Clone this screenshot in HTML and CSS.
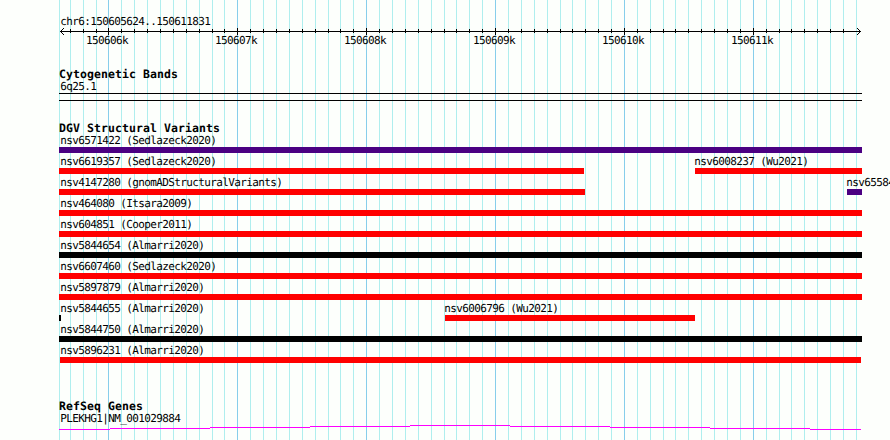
FILE: index.html
```
<!DOCTYPE html>
<html lang="en">
<head>
    <meta charset="UTF-8">
    <title>chr6:150605624..150611831</title>
    <link rel="stylesheet" href="styles.css">
</head>
<body>
    <div class="browser">
        <!-- Vertical grid behind all tracks -->
        <svg class="grid" width="890" height="440" shape-rendering="crispEdges">
            <path class="minor" d="M59.5 0V440M70.5 0V440M83.5 0V440M96.5 0V440M121.5 0V440M134.5 0V440M147.5 0V440M160.5 0V440M173.5 0V440M186.5 0V440M199.5 0V440M212.5 0V440M224.5 0V440M250.5 0V440M263.5 0V440M276.5 0V440M289.5 0V440M302.5 0V440M315.5 0V440M328.5 0V440M340.5 0V440M353.5 0V440M379.5 0V440M392.5 0V440M405.5 0V440M418.5 0V440M431.5 0V440M444.5 0V440M456.5 0V440M469.5 0V440M482.5 0V440M508.5 0V440M521.5 0V440M534.5 0V440M547.5 0V440M560.5 0V440M572.5 0V440M585.5 0V440M598.5 0V440M611.5 0V440M637.5 0V440M650.5 0V440M663.5 0V440M675.5 0V440M688.5 0V440M701.5 0V440M714.5 0V440M727.5 0V440M740.5 0V440M766.5 0V440M779.5 0V440M791.5 0V440M804.5 0V440M817.5 0V440M830.5 0V440M843.5 0V440M856.5 0V440"/>
            <path class="major" d="M108.5 0V440M237.5 0V440M366.5 0V440M495.5 0V440M624.5 0V440M753.5 0V440"/>
        </svg>

        <!-- Scale -->
        <div class="label">chr6:150605624..150611831</div>
        <svg class="ruler" width="803" height="9" viewBox="59 27 803 9" shape-rendering="crispEdges">
            <path d="M60 31.5H861"/>
            <path d="M70.5 29V33M83.5 29V33M96.5 29V33M121.5 29V33M134.5 29V33M147.5 29V33M160.5 29V33M173.5 29V33M186.5 29V33M199.5 29V33M212.5 29V33M224.5 29V33M250.5 29V33M263.5 29V33M276.5 29V33M289.5 29V33M302.5 29V33M315.5 29V33M328.5 29V33M340.5 29V33M353.5 29V33M379.5 29V33M392.5 29V33M405.5 29V33M418.5 29V33M431.5 29V33M444.5 29V33M456.5 29V33M469.5 29V33M482.5 29V33M508.5 29V33M521.5 29V33M534.5 29V33M547.5 29V33M560.5 29V33M572.5 29V33M585.5 29V33M598.5 29V33M611.5 29V33M637.5 29V33M650.5 29V33M663.5 29V33M675.5 29V33M688.5 29V33M701.5 29V33M714.5 29V33M727.5 29V33M740.5 29V33M766.5 29V33M779.5 29V33M791.5 29V33M804.5 29V33M817.5 29V33M830.5 29V33M843.5 29V33"/>
            <path d="M108.5 28V35M237.5 28V35M366.5 28V35M495.5 28V35M624.5 28V35M753.5 28V35"/>
            <path d="M61 30.5h1M62 29.5h1M63 28.5h1M61 32.5h1M62 33.5h1M63 34.5h1M859 30.5h1M858 29.5h1M857 28.5h1M859 32.5h1M858 33.5h1M857 34.5h1"/>
        </svg>
        <div class="ticks label">
            <span>150606k</span>
            <span>150607k</span>
            <span>150608k</span>
            <span>150609k</span>
            <span>150610k</span>
            <span>150611k</span>
        </div>

        <!-- Cytogenetic bands -->
        <section class="cyto">
            <h2>Cytogenetic Bands</h2>
            <div class="label">6q25.1</div>
            <div class="band"></div>
        </section>

        <!-- Structural variants -->
        <section class="variants">
            <h2>DGV Structural Variants</h2>
            <div class="row">
                <div class="feature"><div class="label">nsv6571422 (Sedlazeck2020)</div><div class="bar inversion" style="width: 803px"></div></div>
            </div>
            <div class="row">
                <div class="feature"><div class="label">nsv6619357 (Sedlazeck2020)</div><div class="bar loss" style="width: 525px"></div></div>
                <div class="feature" style="margin-left: 111px"><div class="label inner">nsv6008237 (Wu2021)</div><div class="bar loss" style="width: 167px"></div></div>
            </div>
            <div class="row">
                <div class="feature"><div class="label">nsv4147280 (gnomADStructuralVariants)</div><div class="bar loss" style="width: 526px"></div></div>
                <div class="feature" style="margin-left: 262px"><div class="label inner">nsv65584</div><div class="bar inversion" style="width: 15px"></div></div>
            </div>
            <div class="row">
                <div class="feature"><div class="label">nsv464080 (Itsara2009)</div><div class="bar loss" style="width: 803px"></div></div>
            </div>
            <div class="row">
                <div class="feature"><div class="label">nsv604851 (Cooper2011)</div><div class="bar loss" style="width: 803px"></div></div>
            </div>
            <div class="row">
                <div class="feature"><div class="label">nsv5844654 (Almarri2020)</div><div class="bar other" style="width: 803px"></div></div>
            </div>
            <div class="row">
                <div class="feature"><div class="label">nsv6607460 (Sedlazeck2020)</div><div class="bar loss" style="width: 803px"></div></div>
            </div>
            <div class="row">
                <div class="feature"><div class="label">nsv5897879 (Almarri2020)</div><div class="bar loss" style="width: 803px"></div></div>
            </div>
            <div class="row">
                <div class="feature"><div class="label">nsv5844655 (Almarri2020)</div><div class="bar other" style="width: 2px"></div></div>
                <div class="feature" style="margin-left: 384px"><div class="label inner">nsv6006796 (Wu2021)</div><div class="bar loss" style="width: 250px"></div></div>
            </div>
            <div class="row">
                <div class="feature"><div class="label">nsv5844750 (Almarri2020)</div><div class="bar other" style="width: 803px"></div></div>
            </div>
            <div class="row">
                <div class="feature"><div class="label">nsv5896231 (Almarri2020)</div><div class="bar loss" style="width: 801px; margin-left: 1px"></div></div>
            </div>
        </section>

        <!-- Genes -->
        <section class="genes">
            <h2>RefSeq Genes</h2>
            <div class="label">PLEKHG1|NM_001029884</div>
            <svg class="intron" width="803" height="6" viewBox="59 425 803 6" shape-rendering="crispEdges">
                <path d="M59 429.5H110M110 428.5H210M210 427.5H310M310 426.5H410M410 425.5H510M510 426.5H610M610 427.5H710M710 428.5H810M810 429.5H861"/>
            </svg>
        </section>
    </div>
</body>
</html>
```
FILE: styles.css
```
body {
    margin: 0;
    background-color: #fdfffc;
    color: #000;
    font-family: "DejaVu Sans Mono", monospace;
}

.browser {
    position: relative;
    box-sizing: border-box;
    width: 890px;
    height: 440px;
    padding: 15px 0 0 59px;
    overflow: hidden;
    isolation: isolate;
}

.grid {
    position: absolute;
    top: 0;
    left: 0;
    z-index: -1;
}

.minor {
    stroke: #afeeee;
}

.major {
    stroke: #87ceeb;
}

.label {
    height: 12px;
    padding-left: 1.2px;
    font-size: 11px;
    line-height: 14px;
    letter-spacing: -0.62px;
    white-space: pre;
    text-rendering: geometricPrecision;
}

.label.inner {
    padding-left: 0;
    margin-left: -0.8px;
}

h2 {
    height: 12px;
    margin: 0;
    font-size: 11.5px;
    font-weight: bold;
    line-height: 12px;
    letter-spacing: 0.08px;
    text-rendering: geometricPrecision;
}

.ruler {
    display: block;
    stroke: #000;
}

.ticks {
    display: flex;
    gap: 87px;
    margin-top: -2px;
    padding-left: 27px;
}

.ticks span {
    width: 42px;
}

.cyto {
    margin-top: 22px;
}

.band {
    box-sizing: border-box;
    width: 803px;
    height: 8px;
    margin-top: 1px;
    border-top: 1px solid #000;
    border-bottom: 1px solid #000;
}

.variants {
    margin-top: 21px;
}

.row {
    display: flex;
    height: 21px;
}

.feature {
    flex: none;
}

.row .feature .label {
    width: 0;
}

.bar {
    height: 6px;
    margin-top: 1px;
}

.loss {
    background: #ff0000;
}

.inversion {
    background: #4b0082;
}

.other {
    background: #000;
}

.genes {
    margin-top: 35px;
}

.intron {
    display: block;
    margin-top: 1px;
    stroke: #ff00ff;
}
```
